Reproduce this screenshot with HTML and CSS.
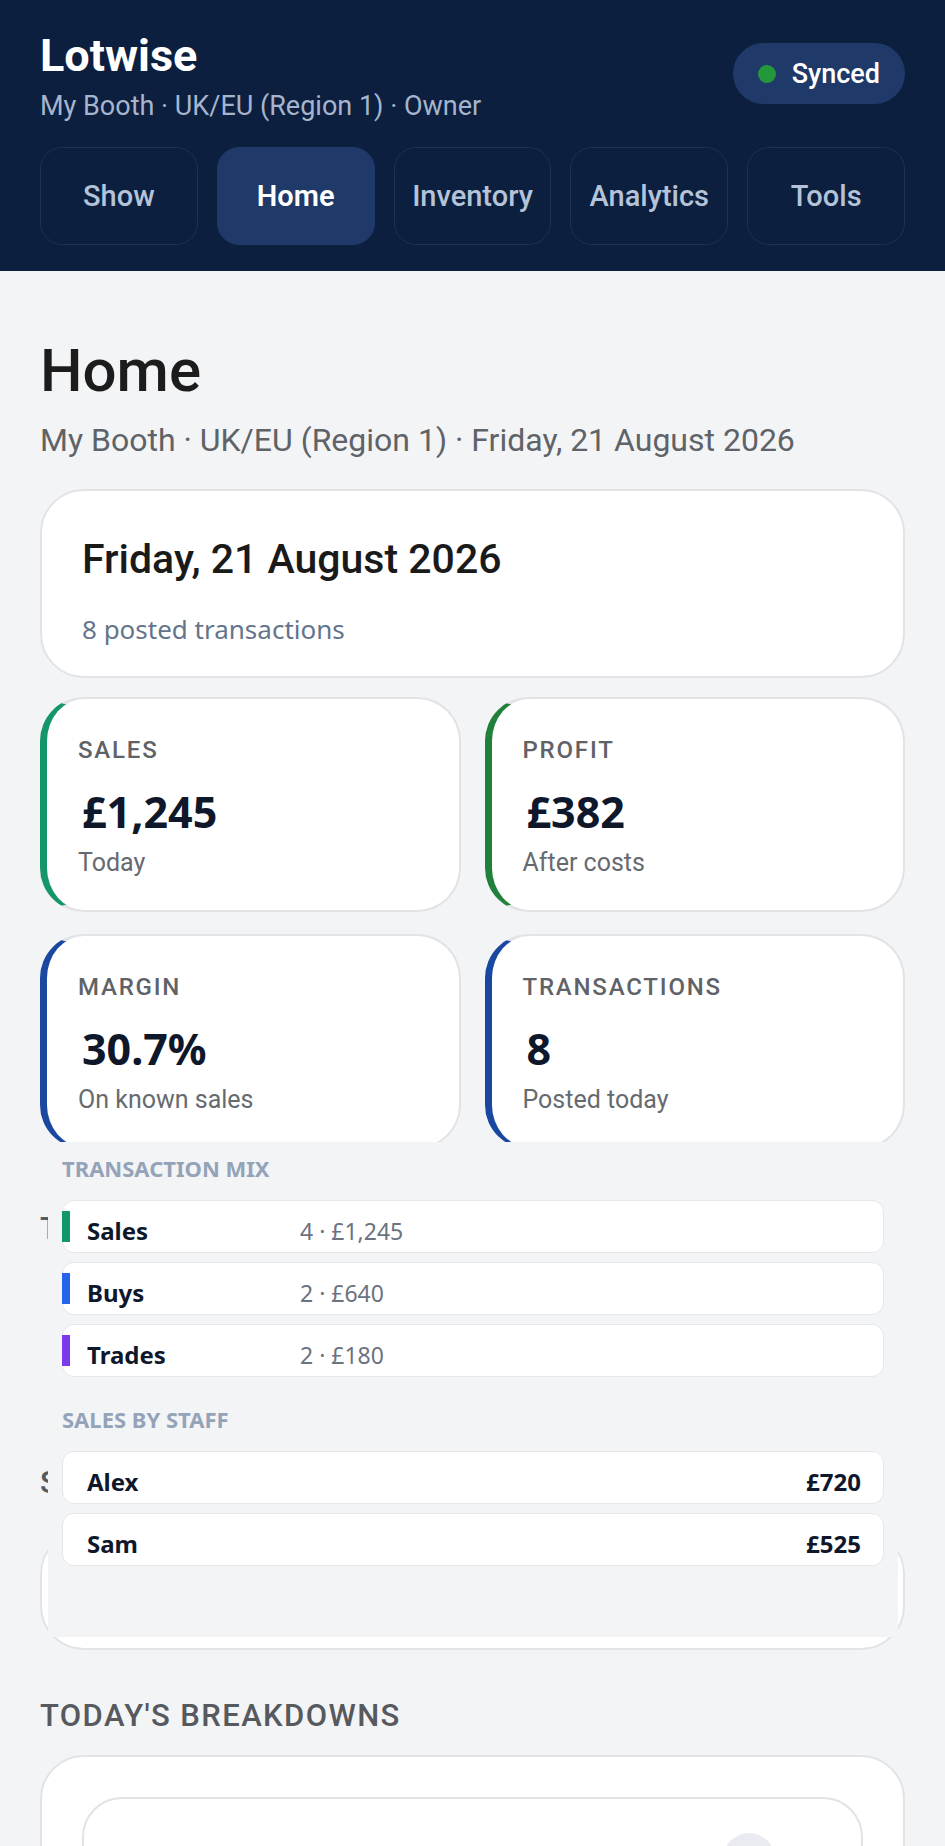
FILE: index.html
```html
<!DOCTYPE html>
<html lang="en">
<head>
<meta charset="utf-8">
<title>Lotwise – Home</title>
<link rel="stylesheet" href="styles.css">
</head>
<body>
<header class="topbar">
  <div class="brand-row">
    <div class="brand">
      <h1 class="brand-name">Lotwise</h1>
      <p class="brand-meta">My Booth · UK/EU (Region 1) · Owner</p>
    </div>
    <div class="sync-pill"><span class="sync-dot"></span><span>Synced</span></div>
  </div>
  <nav class="tabs">
    <a class="tab">Show</a>
    <a class="tab active">Home</a>
    <a class="tab">Inventory</a>
    <a class="tab">Analytics</a>
    <a class="tab">Tools</a>
  </nav>
</header>
<main class="page">
  <h2 class="page-title">Home</h2>
  <p class="page-meta">My Booth · UK/EU (Region 1) · Friday, 21 August 2026</p>
  <section class="day-card">
    <h3 class="day-title">Friday, 21 August 2026</h3>
    <p class="day-sub">8 posted transactions</p>
  </section>
  <div class="board">
    <div class="stats">
      <div class="stat stat-sales">
        <div class="stat-label">SALES</div>
        <div class="stat-value">£1,245</div>
        <div class="stat-note">Today</div>
      </div>
      <div class="stat stat-profit">
        <div class="stat-label">PROFIT</div>
        <div class="stat-value">£382</div>
        <div class="stat-note">After costs</div>
      </div>
      <div class="stat stat-blue">
        <div class="stat-label">MARGIN</div>
        <div class="stat-value">30.7%</div>
        <div class="stat-note">On known sales</div>
      </div>
      <div class="stat stat-blue">
        <div class="stat-label">TRANSACTIONS</div>
        <div class="stat-value">8</div>
        <div class="stat-note">Posted today</div>
      </div>
    </div>
    <h4 class="section-head head-mix">TRANSACTION MIX</h4>
    <h4 class="section-head head-staff">SALES BY STAFF</h4>
    <div class="staff-card"></div>
    <h4 class="section-head head-break">TODAY'S BREAKDOWNS</h4>
    <div class="break-card">
      <div class="break-inner">
        <div class="break-row"><span class="break-chip"></span></div>
      </div>
    </div>

    <div class="overlay">
      <div class="mix-label">TRANSACTION MIX</div>
      <div class="rows">
        <div class="row"><span class="marker marker-sales"></span><span class="row-name">Sales</span><span class="row-value">4 · £1,245</span></div>
        <div class="row"><span class="marker marker-buys"></span><span class="row-name">Buys</span><span class="row-value">2 · £640</span></div>
        <div class="row"><span class="marker marker-trades"></span><span class="row-name">Trades</span><span class="row-value">2 · £180</span></div>
      </div>
      <div class="mix-label label-gap">SALES BY STAFF</div>
      <div class="rows">
        <div class="row staff-row"><span class="row-name">Alex</span><span class="row-amount">£720</span></div>
        <div class="row staff-row"><span class="row-name">Sam</span><span class="row-amount">£525</span></div>
      </div>
    </div>
  </div>
</main>
</body>
</html>
```

FILE: styles.css
```css
* { box-sizing: border-box; }
html, body { margin: 0; }
body {
  background: #f3f4f6;
  font-family: Roboto, "Noto Sans", Arial, sans-serif;
  width: 945px;
  overflow: hidden;
}

/* Header */
.topbar { background: #0c1f3f; padding: 29px 40px 26px; }
.brand-row { display: flex; justify-content: space-between; align-items: flex-start; }
.brand-name { margin: 0; font-size: 45px; line-height: 54px; font-weight: 700; color: #ffffff; }
.brand-meta { margin: 7px 0 0; font-size: 27px; line-height: 32px; color: #a6b5cd; }
.sync-pill {
  margin-top: 14px;
  height: 61px;
  padding: 0 25px;
  border-radius: 31px;
  background: #1f3a68;
  display: flex;
  align-items: center;
  gap: 16px;
  color: #ffffff;
  font-size: 27px;
  font-weight: 500;
}
.sync-dot { width: 18px; height: 18px; border-radius: 50%; background: #25973b; }
.tabs { margin-top: 25px; display: grid; grid-template-columns: repeat(5, 1fr); gap: 19px; }
.tab {
  height: 98px;
  border: 1.5px solid #1c3159;
  border-radius: 22px;
  display: flex;
  align-items: center;
  justify-content: center;
  font-size: 29px;
  font-weight: 500;
  color: #b5c3d9;
}
.tab.active { background: #1f3a68; border-color: #1f3a68; color: #ffffff; font-weight: 600; }

/* Page */
.page { padding: 65px 40px 0; }
.page-title { margin: 0; font-size: 60px; line-height: 70px; font-weight: 500; color: #1c1c1c; }
.page-meta { margin: 15px 0 0; font-size: 32px; line-height: 38px; color: #5f6368; }

.day-card {
  margin-top: 30px;
  background: #ffffff;
  border: 2px solid #e1e3e6;
  border-radius: 44px;
  padding: 44px 40px 30px;
}
.day-title { margin: 0; font-size: 41px; line-height: 48px; font-weight: 500; color: #1a1a1a; }
.day-sub { margin: 29px 0 0; font-family: "Noto Sans", sans-serif; font-size: 26px; line-height: 34px; color: #64748b; }

.board { position: relative; margin-top: 19px; }

.stats { display: grid; grid-template-columns: 1fr 1fr; gap: 22px 24px; }
.stat {
  background: #ffffff;
  border: 2px solid #e1e3e6;
  border-left: 7px solid #15956a;
  border-radius: 44px;
  padding: 36px 20px 32px 31px;
}
.stat-profit { border-left-color: #21803a; }
.stat-blue { border-left-color: #1a47a0; }
.stat-label { font-size: 24px; line-height: 30px; font-weight: 500; letter-spacing: 1.8px; color: #5f6368; }
.stat-value {
  margin: 23px 0 0 4px;
  font-family: "Noto Sans", sans-serif;
  font-weight: 700;
  font-size: 43px;
  line-height: 48px;
  color: #0f172a;
}
.stat-note { margin-top: 12px; font-size: 25px; line-height: 30px; color: #666a6f; }

.section-head {
  margin: 0;
  font-size: 31px;
  line-height: 38px;
  font-weight: 500;
  letter-spacing: 1.4px;
  color: #56595e;
}
.head-mix { margin-top: 61px; }
.head-staff { margin-top: 216px; }
.staff-card {
  margin-top: 28px;
  height: 120px;
  background: #ffffff;
  border: 2px solid #e1e3e6;
  border-radius: 44px;
}
.head-break { margin-top: 47px; }
.break-card {
  margin-top: 20px;
  background: #ffffff;
  border: 2px solid #e1e3e6;
  border-radius: 44px;
  padding: 40px;
  height: 400px;
}
.break-inner {
  border: 2px solid #e1e3e6;
  border-radius: 40px;
  height: 300px;
  padding-top: 34px;
}
.break-row { display: flex; justify-content: flex-end; padding-right: 86px; }
.break-chip { width: 52px; height: 52px; border-radius: 50%; background: #e9ebf0; }

/* Overlay panel */
.overlay {
  position: absolute;
  top: 445px;
  left: 8px;
  width: 850px;
  height: 495px;
  background: #f3f4f6;
  padding: 12px 14px 0;
  font-family: "Noto Sans", sans-serif;
}
.mix-label { font-size: 22px; line-height: 28px; font-weight: 700; color: #94a3b8; }
.label-gap { margin-top: 28px; }
.rows { margin-top: 18px; display: flex; flex-direction: column; gap: 9px; }
.row {
  height: 53px;
  background: #ffffff;
  border: 1px solid #e5e7eb;
  border-radius: 12px;
  display: flex;
  align-items: center;
}
.marker { width: 8px; height: 31px; margin-left: -1px; margin-right: 17px; }
.marker-sales { background: #109868; }
.marker-buys { background: #2563eb; }
.marker-trades { background: #7c3aed; }
.row-name { flex: 0 0 213px; margin-top: 8px; font-size: 24px; font-weight: 700; color: #0f172a; }
.row-value { margin-top: 8px; font-size: 23px; color: #6b7280; }
.staff-row { justify-content: space-between; padding: 0 22px 0 24px; }
.staff-row .row-name { flex: none; }
.row-amount { margin-top: 8px; font-size: 24px; font-weight: 700; color: #0f172a; }
```
